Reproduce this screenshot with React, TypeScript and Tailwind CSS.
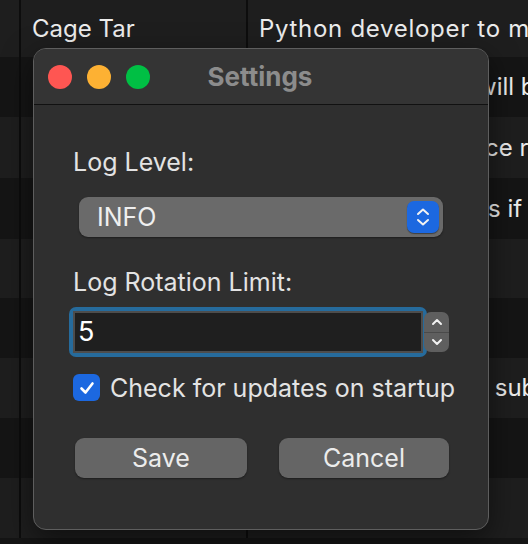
const rows = [
  { a: "Cage Tar", hidden: "", b: "Python developer to make scripts", h: "h-[57px]", bg: "bg-[#1e1e1e]", track: "tracking-[0.7px]" },
  { a: "", hidden: "Scripts that ", b: "will be run daily", h: "h-[60px]", bg: "bg-[#151515]", track: "" },
  { a: "", hidden: "Performan", b: "ce reports", h: "h-[61px]", bg: "bg-[#1e1e1e]", track: "" },
  { a: "", hidden: "Send email alert", b: "s if it fails", h: "h-[61px]", bg: "bg-[#151515]", track: "" },
  { a: "", hidden: "", b: "", h: "h-[59px]", bg: "bg-[#1e1e1e]", track: "" },
  { a: "", hidden: "", b: "", h: "h-[60px]", bg: "bg-[#151515]", track: "" },
  { a: "", hidden: "Results are", b: " submitted", h: "h-[60px]", bg: "bg-[#1e1e1e]", track: "" },
  { a: "", hidden: "", b: "", h: "h-[60px]", bg: "bg-[#151515]", track: "" },
  { a: "", hidden: "", b: "", h: "h-[60px]", bg: "bg-[#1e1e1e]", track: "" },
];

// widths of the part of each description that sits behind the dialog
const hiddenWidth = ["w-0", "w-[218px]", "w-[226px]", "w-[229px]", "w-0", "w-0", "w-[229px]", "w-0", "w-0"];

function Chevrons() {
  return (
    <svg width="16" height="24" viewBox="0 0 16 24" fill="none">
      <path d="M3 9 L8 4.5 L13 9" stroke="#f2f2f2" strokeWidth="2" strokeLinecap="round" strokeLinejoin="round" />
      <path d="M3 15 L8 19.5 L13 15" stroke="#f2f2f2" strokeWidth="2" strokeLinecap="round" strokeLinejoin="round" />
    </svg>
  );
}

function Table() {
  return (
    <div className="flex flex-col">
      {rows.map((r, i) => (
        <div key={i} className={`flex ${r.h} ${r.bg}`}>
          <div className="w-[21px] shrink-0 border-r-2 border-[#0d0d0d]" />
          <div className="w-[227px] shrink-0 border-r-2 border-[#0d0d0d] flex items-center pl-[11px] text-[24px] text-[#ececec] overflow-hidden whitespace-nowrap">
            {r.a}
          </div>
          <div className={`flex-1 flex items-center pl-[11px] text-[24px] ${r.track} text-[#ececec] overflow-hidden whitespace-nowrap`}>
            {r.hidden && (
              <span className={`inline-block shrink-0 overflow-hidden ${hiddenWidth[i]}`}>{r.hidden}</span>
            )}
            <span className="whitespace-pre">{r.b}</span>
          </div>
        </div>
      ))}
    </div>
  );
}

function SettingsDialog() {
  return (
    <div className="absolute left-[33px] top-[48px] w-[456px] h-[482px] rounded-[13px] border border-[#5e5e5e] bg-[#2f2f2f] overflow-hidden shadow-[0_10px_30px_rgba(0,0,0,0.5)]">
      <div className="relative h-[56px] bg-[#343434] border-b border-[#111111] flex items-center">
        <div className="flex items-center gap-[15px] pl-[14px]">
          <span className="w-[24px] h-[24px] rounded-full bg-[#fe5652]" />
          <span className="w-[24px] h-[24px] rounded-full bg-[#fdb133]" />
          <span className="w-[24px] h-[24px] rounded-full bg-[#00bf44]" />
        </div>
        <div className="absolute inset-0 flex items-center justify-center text-[26px] font-bold text-[#8c8c8c] pr-[2px]">
          Settings
        </div>
      </div>
      <div className="flex flex-col">
        <div className="ml-[39px] mt-[43px] text-[25px] leading-[28px] text-[#e3e3e3]">Log Level:</div>
        <div className="ml-[45px] mt-[21px] w-[364px] h-[40px] rounded-[9px] bg-[#6a6a6a] shadow-[0_1px_2px_rgba(0,0,0,0.4)] flex items-center justify-between pl-[18px] pr-[4px]">
          <span className="text-[25px] leading-[30px] text-[#efefef]">INFO</span>
          <span className="w-[32px] h-[32px] rounded-[7px] bg-[#1c68e0] flex items-center justify-center shadow-[0_1px_1px_rgba(0,0,0,0.4)]">
            <Chevrons />
          </span>
        </div>
        <div className="ml-[39px] mt-[31px] text-[25px] leading-[28px] text-[#e3e3e3]">Log Rotation Limit:</div>
        <div className="ml-[35px] mt-[11px] flex items-center">
          <div className="w-[358px] h-[50px] rounded-[7px] bg-[#266b9c] p-[4px]">
            <div className="h-full w-full bg-[#1f1f1f] border-[2px] border-[#4d4d4d] flex items-center pl-[3px] text-[27px] leading-[30px] text-white">
              5
            </div>
          </div>
          <div className="-ml-[3px] w-[25px] h-[40px] rounded-[7px] bg-[#5f5f5f] flex flex-col">
            <div className="flex-1 flex items-center justify-center border-b border-[#4a4a4a]">
              <svg width="14" height="10" viewBox="0 0 14 10" fill="none">
                <path d="M3 7 L7 3 L11 7" stroke="#f2f2f2" strokeWidth="2" strokeLinecap="round" strokeLinejoin="round" />
              </svg>
            </div>
            <div className="flex-1 flex items-center justify-center">
              <svg width="14" height="10" viewBox="0 0 14 10" fill="none">
                <path d="M3 3 L7 7 L11 3" stroke="#f2f2f2" strokeWidth="2" strokeLinecap="round" strokeLinejoin="round" />
              </svg>
            </div>
          </div>
        </div>
        <div className="ml-[39px] mt-[17px] h-[27px] flex items-center gap-[10px]">
          <span className="w-[27px] h-[27px] shrink-0 rounded-[6px] bg-[#1c68e0] flex items-center justify-center">
            <svg width="18" height="18" viewBox="0 0 18 18" fill="none">
              <path d="M3.5 9.5 L7.5 13.5 L14.5 4.5" stroke="#ffffff" strokeWidth="2.6" strokeLinecap="round" strokeLinejoin="round" />
            </svg>
          </span>
          <span className="text-[25px] leading-[28px] text-[#e3e3e3] whitespace-nowrap">Check for updates on startup</span>
        </div>
        <div className="ml-[41px] mt-[37px] flex gap-[32px]">
          <button className="w-[172px] h-[40px] rounded-[9px] bg-[#656565] text-[25px] leading-[30px] text-[#ececec] shadow-[0_1px_2px_rgba(0,0,0,0.4)]">
            Save
          </button>
          <button className="w-[170px] h-[40px] rounded-[9px] bg-[#656565] text-[25px] leading-[30px] text-[#ececec] shadow-[0_1px_2px_rgba(0,0,0,0.4)]">
            Cancel
          </button>
        </div>
      </div>
    </div>
  );
}

export default function App() {
  return (
    <div className="relative w-[528px] h-[544px] overflow-hidden bg-[#151515] font-['Inter','Noto_Sans',sans-serif]">
      <Table />
      <SettingsDialog />
    </div>
  );
}
